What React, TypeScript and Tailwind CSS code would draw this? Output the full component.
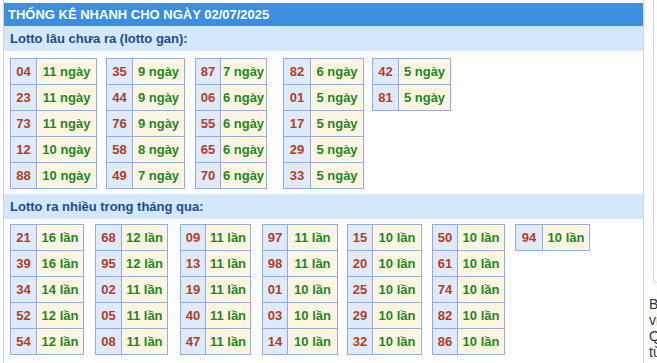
type Lotto = {
  ml: string
  nw: string
  vw: string
  rows: [string, string][]
}

// lotto gan: numbers that have not appeared for a while
const ganTables: Lotto[] = [
  {
    ml: 'ml-[6px]',
    nw: 'w-[26px]',
    vw: 'w-[59px]',
    rows: [['04', '11'], ['23', '11'], ['73', '11'], ['12', '10'], ['88', '10']],
  },
  {
    ml: 'ml-[9px]',
    nw: 'w-[26px]',
    vw: 'w-[51px]',
    rows: [['35', '9'], ['44', '9'], ['76', '9'], ['58', '8'], ['49', '7']],
  },
  {
    ml: 'ml-[10px]',
    nw: 'w-[25px]',
    vw: 'w-[45px]',
    rows: [['87', '7'], ['06', '6'], ['55', '6'], ['65', '6'], ['70', '6']],
  },
  {
    ml: 'ml-[16px]',
    nw: 'w-[27px]',
    vw: 'w-[52px]',
    rows: [['82', '6'], ['01', '5'], ['17', '5'], ['29', '5'], ['33', '5']],
  },
  {
    ml: 'ml-[8px]',
    nw: 'w-[26px]',
    vw: 'w-[51px]',
    rows: [['42', '5'], ['81', '5']],
  },
]

// most frequent numbers in the last month
const hotTables: Lotto[] = [
  {
    ml: 'ml-[6px]',
    nw: 'w-[26px]',
    vw: 'w-[46px]',
    rows: [['21', '16'], ['39', '16'], ['34', '14'], ['52', '12'], ['54', '12']],
  },
  {
    ml: 'ml-[11px]',
    nw: 'w-[26px]',
    vw: 'w-[45px]',
    rows: [['68', '12'], ['95', '12'], ['02', '11'], ['05', '11'], ['08', '11']],
  },
  {
    ml: 'ml-[12px]',
    nw: 'w-[25px]',
    vw: 'w-[44px]',
    rows: [['09', '11'], ['13', '11'], ['19', '11'], ['40', '11'], ['47', '11']],
  },
  {
    ml: 'ml-[11px]',
    nw: 'w-[25px]',
    vw: 'w-[49px]',
    rows: [['97', '11'], ['98', '11'], ['01', '10'], ['03', '10'], ['14', '10']],
  },
  {
    ml: 'ml-[9px]',
    nw: 'w-[25px]',
    vw: 'w-[48px]',
    rows: [['15', '10'], ['20', '10'], ['25', '10'], ['29', '10'], ['32', '10']],
  },
  {
    ml: 'ml-[10px]',
    nw: 'w-[25px]',
    vw: 'w-[46px]',
    rows: [['50', '10'], ['61', '10'], ['74', '10'], ['82', '10'], ['86', '10']],
  },
  {
    ml: 'ml-[10px]',
    nw: 'w-[27px]',
    vw: 'w-[46px]',
    rows: [['94', '10']],
  },
]

const NumTable = ({ t, unit }: { t: Lotto; unit: string }) => (
  <div className={`${t.ml} flex flex-col border border-[#8fade0]`}>
    {t.rows.map(([num, count], i) => (
      <div
        key={num}
        className={
          i < t.rows.length - 1
            ? 'flex h-[26px] border-b border-[#8fade0]'
            : 'flex h-[25px]'
        }
      >
        <div
          className={`${t.nw} flex items-center justify-center border-r border-[#8fade0] bg-[#dfeafc] text-[#b0401d]`}
        >
          {num}
        </div>
        <div
          className={`${t.vw} flex items-center justify-center bg-[#fff5e2] text-[#1b8a1b]`}
        >
          {count} {unit}
        </div>
      </div>
    ))}
  </div>
)

const SubHeader = ({ children }: { children: string }) => (
  <div className="flex h-[25px] items-center bg-[#d4e7fb] pl-[6px] text-[13px] font-bold text-[#1b4d8e]">
    {children}
  </div>
)

export default function App() {
  return (
    <div className="flex h-[363px] w-[657px] items-start overflow-hidden bg-white font-['Liberation_Sans',Arial,sans-serif]">
      {/* main stats panel */}
      <div className="ml-[3px] h-[363px] w-[641px] shrink-0 border-x border-[#cfd4dc]">
        <div className="flex h-[23px] items-center bg-[#3b8ee0] pl-[4px] text-[13px] font-bold text-white mt-[3px]">
          THỐNG KÊ NHANH CHO NGÀY 02/07/2025
        </div>
        <SubHeader>Lotto lâu chưa ra (lotto gan):</SubHeader>
        <div className="mt-[7px] flex items-start text-[13px] font-bold">
          {ganTables.map((t) => (
            <NumTable key={t.rows[0][0]} t={t} unit="ngày" />
          ))}
        </div>
        <div className="mt-[5px]">
          <SubHeader>Lotto ra nhiều trong tháng qua:</SubHeader>
        </div>
        <div className="mt-[5px] flex items-start text-[13px] font-bold">
          {hotTables.map((t) => (
            <NumTable key={t.rows[0][0]} t={t} unit="lần" />
          ))}
        </div>
      </div>

      {/* sidebar */}
      <div className="ml-[5px] w-[200px] shrink-0">
        <div className="ml-[4px] h-[283px] rounded-bl-[4px] border-b border-l border-[#d6d9de]" />
        <div className="mt-[13px] text-[14px] leading-[16px] text-[#333]">
          <div className="whitespace-nowrap">Bảng</div>
          <div className="whitespace-nowrap">việc</div>
          <div className="whitespace-nowrap">Quay</div>
          <div className="whitespace-nowrap">từ</div>
        </div>
      </div>
    </div>
  )
}
